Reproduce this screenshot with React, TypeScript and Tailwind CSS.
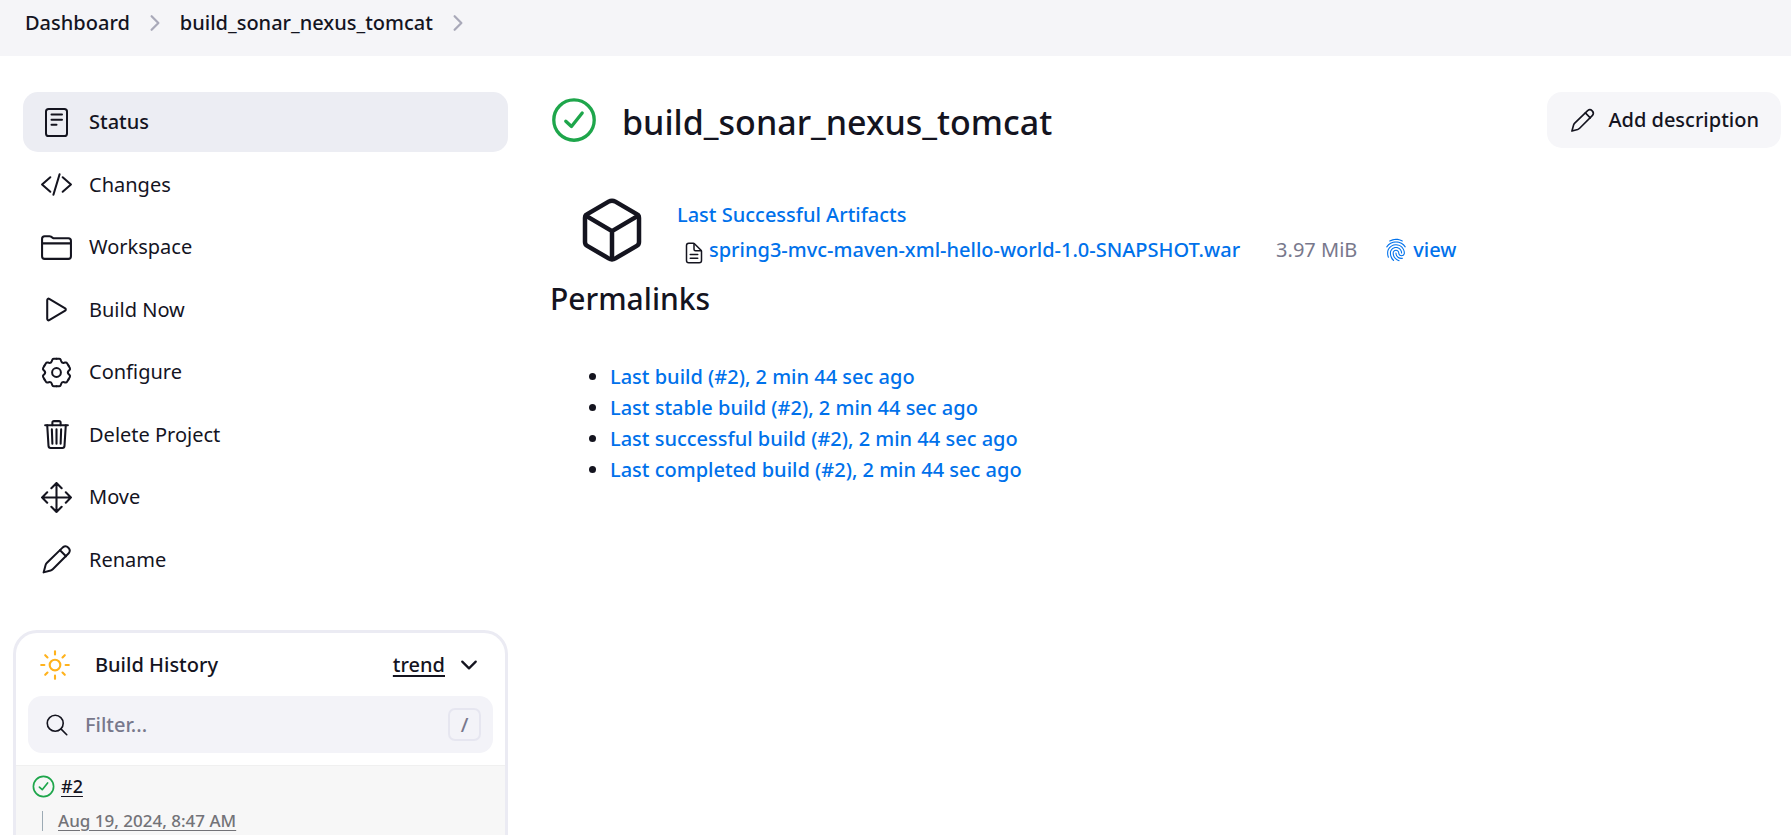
import type { ReactNode } from "react";
import {
  IoChevronDown,
  IoChevronForward,
  IoCodeSlashOutline,
  IoCubeOutline,
  IoDocumentTextOutline,
  IoFingerPrintOutline,
  IoFolderOutline,
  IoMoveOutline,
  IoPlayOutline,
  IoSearchOutline,
  IoSunnyOutline,
  IoTrashOutline,
} from "react-icons/io5";

function StatusIcon() {
  return (
    <svg viewBox="0 0 33 33" width="33" height="33" fill="none" stroke="currentColor" strokeWidth="2" strokeLinecap="round" aria-hidden="true">
      <rect x="6" y="3" width="21" height="27" rx="2.6" />
      <path d="M11.5 8.6h10.5M11.5 13.7h10.5M11.5 18.8h5" />
    </svg>
  );
}

const GEAR_SIXTH =
  "M0-13.8H2.8Q4-13.8 4.3-12.6L4.6-11.4Q5.25-9.1 7.6-9.7L8.76-10.02Q9.95-10.36 10.55-9.32L12-6.9";

function GearIcon() {
  return (
    <svg viewBox="-16.5 -16.5 33 33" width="33" height="33" fill="none" stroke="currentColor" strokeWidth="2" strokeLinecap="round" strokeLinejoin="round" aria-hidden="true">
      <circle r="4.4" />
      {[0, 60, 120, 180, 240, 300].map((angle) => (
        <path key={angle} d={GEAR_SIXTH} transform={`rotate(${angle})`} />
      ))}
    </svg>
  );
}

function PencilIcon({ size }: { size: number }) {
  return (
    <svg viewBox="0 0 33 33" width={size} height={size} fill="none" stroke="currentColor" strokeWidth="2" strokeLinecap="round" strokeLinejoin="round" aria-hidden="true">
      <path d="M3.6 29.4L5.6 22Q6 20.8 7 19.8L22.8 4.4A4.2 4.2 0 0 1 28.7 10.3L13 26Q12 27 10.6 27.5Z" />
      <path d="M20 7.2L26 13.2" />
    </svg>
  );
}

function SuccessIcon({ size }: { size: number }) {
  return (
    <svg viewBox="0 0 512 512" width={size} height={size} fill="none" stroke="#1ea64b" strokeWidth="34" strokeLinecap="round" strokeLinejoin="round" className="shrink-0" role="img" aria-label="Success">
      <circle cx="256" cy="256" r="207" />
      <path d="M340 184L230 322 172 268" />
    </svg>
  );
}

const tasks: { label: string; icon: ReactNode; active?: boolean }[] = [
  { label: "Status", icon: <StatusIcon />, active: true },
  { label: "Changes", icon: <IoCodeSlashOutline size={33} /> },
  { label: "Workspace", icon: <IoFolderOutline size={33} /> },
  { label: "Build Now", icon: <IoPlayOutline size={33} /> },
  { label: "Configure", icon: <GearIcon /> },
  { label: "Delete Project", icon: <IoTrashOutline size={33} /> },
  { label: "Move", icon: <IoMoveOutline size={33} /> },
  { label: "Rename", icon: <PencilIcon size={33} /> },
];

const permalinks = [
  "Last build (#2), 2 min 44 sec ago",
  "Last stable build (#2), 2 min 44 sec ago",
  "Last successful build (#2), 2 min 44 sec ago",
  "Last completed build (#2), 2 min 44 sec ago",
];

function Breadcrumbs() {
  return (
    <nav aria-label="Breadcrumb" className="flex h-14 shrink-0 items-center gap-[13px] bg-[#f5f5f8] pb-[11px] pl-[25px] font-medium">
      <a href="#dashboard">Dashboard</a>
      <IoChevronForward size={24} className="text-[#a9a9b9]" />
      <a href="#job">build_sonar_nexus_tomcat</a>
      <IoChevronForward size={24} className="text-[#a9a9b9]" />
    </nav>
  );
}

function BuildHistory() {
  return (
    <section className="mt-10 flex grow flex-col overflow-hidden rounded-t-[24px] border-[3px] border-b-0 border-[#ebebf3]">
      <div className="flex h-[63px] items-center pr-6 pl-[22px] font-medium">
        <IoSunnyOutline size={34} className="text-[#ffb21c]" />
        <h2 className="ml-[23px] grow">Build History</h2>
        <a href="#trend" className="underline decoration-2 underline-offset-[3px]">trend</a>
        <button type="button" aria-label="Collapse build history" className="ml-3">
          <IoChevronDown size={24} />
        </button>
      </div>
      <label className="mx-3 mb-3 flex h-[57px] shrink-0 items-center rounded-[14px] bg-[#f3f3f8] pr-3 pl-4">
        <IoSearchOutline size={26} />
        <input
          type="text"
          aria-label="Filter builds"
          placeholder="Filter..."
          className="ml-[15px] min-w-0 grow bg-transparent font-medium outline-none placeholder:text-[#78788c]"
        />
        <kbd className="flex size-[33px] items-center justify-center rounded-[7px] border-2 border-[#e6e6f0] font-['Noto_Sans',sans-serif] text-[20px] font-medium text-[#78788c]">/</kbd>
      </label>
      <div className="grow border-t border-[#f0f0f0] bg-[#f7f7f7] font-medium">
        <div className="flex h-[40px] items-center gap-[5px] pl-[15px] text-[18px]">
          <SuccessIcon size={25} />
          <a href="#build-2" className="underline decoration-1 underline-offset-[3px]">#2</a>
        </div>
        <div className="flex h-[29px] items-center gap-[15px] pl-[26px] text-[17px]">
          <span className="h-5 w-px bg-[#9caab4]" />
          <a href="#build-2" className="text-[#737378] underline decoration-1 underline-offset-[3px]">Aug 19, 2024, 8:47 AM</a>
        </div>
      </div>
    </section>
  );
}

export default function App() {
  return (
    <div className="flex min-h-screen flex-col bg-white font-['Noto_Sans','Open_Sans',sans-serif] text-[20px] text-[#14141f]">
      <Breadcrumbs />
      <div className="flex grow pr-[10px] pl-[13px]">
        <aside className="flex w-[495px] shrink-0 flex-col pt-9">
          <nav aria-label="Tasks" className="flex min-h-[498px] flex-col justify-between pl-[10px]">
            {tasks.map(({ label, icon, active }) => (
              <a
                key={label}
                href="#task"
                aria-current={active ? "page" : undefined}
                className={
                  active
                    ? "flex h-[60px] items-center gap-4 rounded-[15px] bg-[#ecedf3] px-[17px] font-medium"
                    : "flex h-[60px] items-center gap-4 rounded-[15px] px-[17px]"
                }
              >
                {icon}
                {label}
              </a>
            ))}
          </nav>
          <BuildHistory />
        </aside>

        <main className="ml-[41px] grow pt-9">
          <div className="flex h-14 items-center">
            <SuccessIcon size={50} />
            <h1 className="ml-[23px] grow pt-[3px] text-[34px] leading-[48px] font-medium">build_sonar_nexus_tomcat</h1>
            <button type="button" className="flex h-14 items-center gap-3 rounded-[15px] bg-[#f6f6f9] px-[22px] font-medium">
              <PencilIcon size={27} />
              Add description
            </button>
          </div>

          <div className="mt-[46px] flex h-[72px] items-center gap-[29px] pl-[27px] leading-[35px] font-medium text-[#0071eb]">
            <IoCubeOutline size={72} className="text-[#14141f]" />
            <div className="pt-1">
              <a href="#artifacts">Last Successful Artifacts</a>
              <div className="flex h-[35px] items-center gap-[27px] pl-[5px]">
                <a href="#war" className="flex items-center gap-[3px]">
                  <IoDocumentTextOutline size={24} className="mt-[6px] text-[#14141f]" />
                  spring3-mvc-maven-xml-hello-world-1.0-SNAPSHOT.war
                </a>
                <span className="ml-[9px] font-normal text-[#78788c]">3.97 MiB</span>
                <a href="#fingerprint" className="flex items-center gap-[5px]">
                  <IoFingerPrintOutline size={24} />
                  view
                </a>
              </div>
            </div>
          </div>

          <h2 className="mt-[13px] pl-px text-[30px] leading-10 font-medium">Permalinks</h2>
          <ul className="mt-[42px] list-disc pl-[61px] leading-[31px]">
            {permalinks.map((text) => (
              <li key={text}>
                <a href="#build-2" className="font-medium text-[#0071eb]">{text}</a>
              </li>
            ))}
          </ul>
        </main>
      </div>
    </div>
  );
}
